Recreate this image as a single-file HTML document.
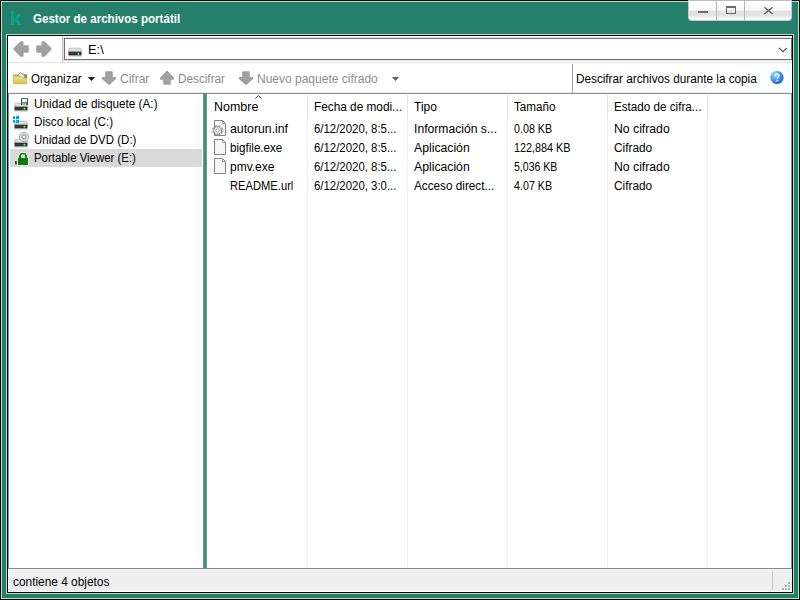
<!DOCTYPE html>
<html><head><meta charset="utf-8">
<style>
*{margin:0;padding:0;box-sizing:border-box}
html,body{width:800px;height:600px;overflow:hidden;background:#000}
body{position:relative;font-family:"Liberation Sans",sans-serif;font-size:12px;color:#000}
.a{position:absolute}
.t{white-space:nowrap;line-height:14px;transform-origin:0 0}
svg{display:block}
</style></head><body>
<div class="a" style="left:1px;top:1px;width:798px;height:598px;background:#267f6b;border:1px solid #a6e6cf"></div>
<div class="a" style="left:6px;top:34px;width:788px;height:560px;background:#000;border:1px solid #a6e6cf"></div>
<div class="a" style="left:8px;top:36px;width:784px;height:556px;background:#fff;"></div>
<svg class="a" style="left:11px;top:11px" width="11" height="14" viewBox="0 0 11 14"><path d="M0 0h3v14H0z M3.5 8.7 L7.2 3 H10.4 L6.3 8.6 L10.4 14 H7.1 Z" fill="#00a88e"/></svg>
<div class="a t" style="left:33px;top:12px;transform:scaleX(0.9638);color:#fff;font-weight:bold;">Gestor de archivos portátil</div>
<div class="a" style="left:688px;top:0px;width:104px;height:21px;background:linear-gradient(#fff 0,#f8f8f8 9px,#e4e4e4 10px,#e2e2e2 14px,#f6f6f6 17px,#fff 19px);border:1px solid #cdc8c8;border-top-color:#bdbdbd;border-radius:0 0 4px 4px"></div>
<div class="a" style="left:716px;top:0px;width:1px;height:20px;background:#b5b5b5;"></div>
<div class="a" style="left:744px;top:0px;width:1px;height:20px;background:#b5b5b5;"></div>
<div class="a" style="left:698px;top:11px;width:10px;height:2px;background:#6b6b6b;"></div>
<div class="a" style="left:726px;top:6px;width:10px;height:8px;background:transparent;border:1px solid #6b6b6b;border-top-width:2px"></div>
<svg class="a" style="left:763px;top:6px" width="11" height="10" viewBox="0 0 11 10"><path d="M1.4 1.2 L9.6 8 M9.6 1.2 L1.4 8" stroke="#5c5c5c" stroke-width="1.3"/></svg>
<div class="a" style="left:8px;top:62px;width:784px;height:1px;background:#e3e3e3;"></div>
<div class="a" style="left:62px;top:36px;width:1px;height:27px;background:#bdbdbd;"></div>
<svg class="a" style="left:12px;top:40px" width="42" height="18" viewBox="0 0 42 18">
<path d="M2.1 8.85 L8.8 2.1 H10.7 V6 H15.9 V11.9 H10.7 V15.9 H8.8 Z" fill="#a0a0a0" stroke="#a0a0a0" stroke-width="1.7" stroke-linejoin="round"/>
<path d="M38.9 8.85 L32.2 2.1 H30.3 V6 H25.1 V11.9 H30.3 V15.9 H32.2 Z" fill="#a0a0a0" stroke="#a0a0a0" stroke-width="1.7" stroke-linejoin="round"/>
</svg>
<div class="a" style="left:63px;top:37px;width:729px;height:24px;background:transparent;border:1px solid #e6e6e6;border-right:none"></div>
<div class="a" style="left:64px;top:38px;width:728px;height:22px;background:transparent;border:1px solid #707070"></div>
<svg class="a" style="left:0;top:0;width:0;height:0"><defs>
<linearGradient id="dtop" x1="0" y1="0" x2="0" y2="1"><stop offset="0" stop-color="#ebebeb"/><stop offset="1" stop-color="#cdcdcd"/></linearGradient>
<radialGradient id="hg" cx="0.35" cy="0.3" r="0.75"><stop offset="0" stop-color="#a0dcfc"/><stop offset="0.5" stop-color="#4a9ee6"/><stop offset="1" stop-color="#1a62cc"/></radialGradient>
</defs></svg>
<svg class="a" style="left:67px;top:47px" width="16" height="11" viewBox="0 0 16 11">
<path d="M1.5 5 L2.1 1.9 Q2.3 1.2 3 1.2 H13 Q13.7 1.2 13.9 1.9 L14.5 5 Z" fill="url(#dtop)" stroke="#aaaaaa" stroke-width="0.7"/>
<rect x="1.5" y="4.8" width="13" height="3.8" fill="#2e2e2e"/>
<rect x="2.5" y="6.2" width="8" height="0.5" fill="#555"/>
<rect x="1.5" y="8.6" width="13" height="1" fill="#c4c8cc"/>
<circle cx="11.5" cy="6.7" r="1" fill="#4cff4c"/>
</svg>
<div class="a t" style="left:88px;top:43px;transform:scaleX(1.0714);">E:\</div>
<svg class="a" style="left:778px;top:46px" width="10" height="7" viewBox="0 0 10 7"><path d="M1 1.8 L5 5.7 L9 1.8" fill="none" stroke="#4a4a4a" stroke-width="1.1"/></svg>
<div class="a" style="left:8px;top:92px;width:784px;height:1px;background:#ececec;"></div>
<div class="a" style="left:8px;top:93px;width:784px;height:1px;background:#898c97;"></div>
<div class="a" style="left:8px;top:93px;width:1px;height:476px;background:#888b96;"></div>
<div class="a" style="left:791px;top:93px;width:1px;height:476px;background:#888b96;"></div>
<div class="a" style="left:572px;top:64px;width:1px;height:29px;background:#a0a0a0;"></div>
<svg class="a" style="left:12px;top:71px" width="16" height="14" viewBox="0 0 16 14">
<defs><linearGradient id="fold" x1="0" y1="0" x2="0" y2="1"><stop offset="0" stop-color="#efe48a"/><stop offset="1" stop-color="#d4c04e"/></linearGradient></defs>
<path d="M1.2 3.2 H6 L7 2.5 H12 L14.8 4 V12 H1.2 Z" fill="#c2b66e"/>
<path d="M12 3.6 H14.8 V7.5 H12 Z" fill="#857a36"/>
<path d="M5.8 4.2 L8.4 1.2 L13 5.4 L11.8 7 Z" fill="#fff" stroke="#7f8fb0" stroke-width="0.8" stroke-linejoin="round"/>
<path d="M1.2 5.5 H9.5 L11 7 H14.8 V12.4 Q14.8 13 14.2 13 H1.8 Q1.2 13 1.2 12.4 Z" fill="url(#fold)" stroke="#c8b452" stroke-width="0.5"/>
</svg>
<div class="a t" style="left:31px;top:72px;transform:scaleX(0.9623);">Organizar</div>
<svg class="a" style="left:87px;top:76px" width="9" height="6" viewBox="0 0 9 6"><path d="M0.9 1 H8.1 L4.5 4.9 Z" fill="#151515"/></svg>
<svg class="a" style="left:101px;top:70px" width="16" height="16" viewBox="0 0 16 16"><path d="M4.2 1.9 L5 1.2 H11 L11.8 1.9 V7 H15 V8.9 L8.6 14.8 H7.4 L1 8.9 V7 H4.2 Z" fill="#a0a0a0"/></svg>
<div class="a t" style="left:120px;top:72px;color:#8c8c8c;">Cifrar</div>
<svg class="a" style="left:159px;top:70px" width="16" height="16" viewBox="0 0 16 16"><path d="M4.2 14.1 L5 14.8 H11 L11.8 14.1 V9.7 H15 V7.8 L8.6 1.1 H7.4 L1 7.8 V9.7 H4.2 Z" fill="#a0a0a0"/></svg>
<div class="a t" style="left:178px;top:72px;transform:scaleX(0.9787);color:#8c8c8c;">Descifrar</div>
<svg class="a" style="left:238px;top:70px" width="16" height="16" viewBox="0 0 16 16"><path d="M4.2 1.9 L5 1.2 H11 L11.8 1.9 V7 H15 V8.9 L8.6 14.8 H7.4 L1 8.9 V7 H4.2 Z" fill="#a0a0a0"/></svg>
<div class="a t" style="left:257px;top:72px;color:#8c8c8c;">Nuevo paquete cifrado</div>
<svg class="a" style="left:391px;top:76px" width="9" height="6" viewBox="0 0 9 6"><path d="M0.9 1 H8.1 L4.5 4.9 Z" fill="#626262"/></svg>
<div class="a t" style="left:576px;top:72px;transform:scaleX(0.9783);">Descifrar archivos durante la copia</div>
<svg class="a" style="left:769px;top:70px" width="16" height="16" viewBox="0 0 16 16">
<circle cx="8" cy="7.5" r="6.6" fill="url(#hg)"/>
<path d="M6.2 5.7 Q6.3 3.9 8.2 3.9 Q10 4 10 5.5 Q10 6.4 9 7 Q8.3 7.5 8.3 8.8" fill="none" stroke="#fff" stroke-width="1.35"/>
<rect x="7.5" y="9.8" width="1.6" height="1.5" fill="#fff"/>
</svg>
<div class="a" style="left:10px;top:149px;width:192px;height:18px;background:#d9d9d9;"></div>
<div class="a t" style="left:34px;top:97px;transform:scaleX(0.9800);">Unidad de disquete (A:)</div>
<div class="a t" style="left:34px;top:115px;transform:scaleX(0.9725);">Disco local (C:)</div>
<div class="a t" style="left:34px;top:133px;transform:scaleX(0.9600);">Unidad de DVD (D:)</div>
<div class="a t" style="left:34px;top:151px;transform:scaleX(0.9509);">Portable Viewer (E:)</div>
<svg class="a" style="left:13px;top:102px" width="16" height="11" viewBox="0 0 16 11">
<path d="M1.5 5 L2.1 1.9 Q2.3 1.2 3 1.2 H13 Q13.7 1.2 13.9 1.9 L14.5 5 Z" fill="url(#dtop)" stroke="#aaaaaa" stroke-width="0.7"/>
<rect x="1.5" y="4.8" width="13" height="3.8" fill="#2e2e2e"/>
<rect x="2.5" y="6.2" width="8" height="0.5" fill="#555"/>
<rect x="1.5" y="8.6" width="13" height="1" fill="#c4c8cc"/>
<circle cx="11.5" cy="6.7" r="1" fill="#4cff4c"/>
</svg>
<svg class="a" style="left:20px;top:97px" width="9" height="9" viewBox="0 0 9 9">
<rect x="1" y="1" width="7" height="7" fill="#4a4a4a"/>
<rect x="1" y="1" width="7" height="1" fill="#2c6ed0"/>
<rect x="2" y="2" width="5" height="3" fill="#f4f4f4"/>
<rect x="2.3" y="5.6" width="3.8" height="2.4" fill="#d6d6d6"/>
<rect x="3.6" y="6.3" width="1.2" height="1.1" fill="#333"/>
</svg>
<svg class="a" style="left:13px;top:120px" width="16" height="11" viewBox="0 0 16 11">
<path d="M1.5 5 L2.1 1.9 Q2.3 1.2 3 1.2 H13 Q13.7 1.2 13.9 1.9 L14.5 5 Z" fill="url(#dtop)" stroke="#aaaaaa" stroke-width="0.7"/>
<rect x="1.5" y="4.8" width="13" height="3.8" fill="#2e2e2e"/>
<rect x="2.5" y="6.2" width="8" height="0.5" fill="#555"/>
<rect x="1.5" y="8.6" width="13" height="1" fill="#c4c8cc"/>
<circle cx="11.5" cy="6.7" r="1" fill="#4cff4c"/>
</svg>
<svg class="a" style="left:12px;top:115px" width="8" height="9" viewBox="0 0 8 9">
<rect x="0.8" y="1.2" width="2.3" height="2.8" fill="#00a8f0"/>
<path d="M4 1 L7 0.6 V4 H4 Z" fill="#00a8f0"/>
<rect x="0.8" y="4.8" width="2.3" height="2.8" fill="#00a8f0"/>
<path d="M4 4.8 H7 V8.2 L4 7.8 Z" fill="#00a8f0"/>
</svg>
<svg class="a" style="left:13px;top:138px" width="16" height="11" viewBox="0 0 16 11">
<path d="M1.5 5 L2.1 1.9 Q2.3 1.2 3 1.2 H13 Q13.7 1.2 13.9 1.9 L14.5 5 Z" fill="url(#dtop)" stroke="#aaaaaa" stroke-width="0.7"/>
<rect x="1.5" y="4.8" width="13" height="3.8" fill="#2e2e2e"/>
<rect x="2.5" y="6.2" width="8" height="0.5" fill="#555"/>
<rect x="1.5" y="8.6" width="13" height="1" fill="#c4c8cc"/>
<circle cx="11.5" cy="6.7" r="1" fill="#4cff4c"/>
</svg>
<svg class="a" style="left:18px;top:131px" width="12" height="12" viewBox="0 0 12 12">
<circle cx="6" cy="6" r="4.6" fill="#dfe3e3" stroke="#a4a4a4" stroke-width="0.9"/>
<circle cx="6" cy="6" r="2.2" fill="#c8c8c8" stroke="#8a8a8a" stroke-width="0.8"/>
<circle cx="6" cy="6" r="1" fill="#fff"/>
</svg>
<svg class="a" style="left:13px;top:151px" width="17" height="16" viewBox="0 0 17 16">
<rect x="1.6" y="9.5" width="2.4" height="4.6" fill="#eef0f0"/>
<rect x="2" y="10" width="1.8" height="3.5" fill="#404040"/>
<path d="M4.4 15 V6.6 H5.3 V4.2 L6.3 3.2 V2.6 L7.6 1.3 H12.4 L13.7 2.6 V3.2 L14.7 4.2 V6.6 H15.6 V15 Z" fill="#fff"/>
<rect x="5" y="7" width="10" height="7" fill="#008000"/>
<path d="M6 7.2 V4.5 L7 3.5 V3 L8 2 H12 L13 3 V3.5 L14 4.5 V7.2 Z M8 7.2 V4.3 L8.8 3.5 H11.2 L12 4.3 V7.2 Z" fill="#008000" fill-rule="evenodd"/>
<rect x="8.8" y="4.3" width="2.4" height="2.7" fill="#dcdcdc"/>
</svg>
<div class="a" style="left:203px;top:93px;width:4px;height:476px;background:#2a9a7c;border-left:1px solid #888b96;border-right:1px solid #888b96"></div>
<div class="a t" style="left:214px;top:100px;transform:scaleX(1.0381);">Nombre</div>
<svg class="a" style="left:254px;top:94px" width="10" height="6" viewBox="0 0 10 6"><path d="M1.3 4.7 L4.4 1.5 L7.5 4.7" fill="none" stroke="#555" stroke-width="1"/></svg>
<div class="a t" style="left:314px;top:100px;transform:scaleX(0.9841);">Fecha de modi...</div>
<div class="a t" style="left:414px;top:100px;">Tipo</div>
<div class="a t" style="left:514px;top:100px;transform:scaleX(0.9709);">Tamaño</div>
<div class="a t" style="left:614px;top:100px;transform:scaleX(0.9716);">Estado de cifra...</div>
<div class="a" style="left:307px;top:95px;width:1px;height:24px;background:#e5e5e5;"></div>
<div class="a" style="left:307px;top:119px;width:1px;height:449px;background:#eaf1fb;"></div>
<div class="a" style="left:407px;top:95px;width:1px;height:24px;background:#e5e5e5;"></div>
<div class="a" style="left:407px;top:119px;width:1px;height:449px;background:#eaf1fb;"></div>
<div class="a" style="left:507px;top:95px;width:1px;height:24px;background:#e5e5e5;"></div>
<div class="a" style="left:507px;top:119px;width:1px;height:449px;background:#eaf1fb;"></div>
<div class="a" style="left:607px;top:95px;width:1px;height:24px;background:#e5e5e5;"></div>
<div class="a" style="left:607px;top:119px;width:1px;height:449px;background:#eaf1fb;"></div>
<div class="a" style="left:707px;top:95px;width:1px;height:24px;background:#e5e5e5;"></div>
<div class="a" style="left:707px;top:119px;width:1px;height:449px;background:#eaf1fb;"></div>
<div class="a t" style="left:230px;top:122px;transform:scaleX(1.0228);">autorun.inf</div>
<div class="a t" style="left:314px;top:122px;transform:scaleX(0.9500);">6/12/2020, 8:5...</div>
<div class="a t" style="left:414px;top:122px;transform:scaleX(1.0125);">Información s...</div>
<div class="a t" style="left:514px;top:122px;transform:scaleX(0.8929);">0.08 KB</div>
<div class="a t" style="left:614px;top:122px;transform:scaleX(1.0185);">No cifrado</div>
<svg class="a" style="left:214px;top:120px" width="12" height="16" viewBox="0 0 12 16"><path d="M0.5 0.5 H8.5 L11.5 3.5 V15.5 H0.5 Z" fill="#f6f6f6" stroke="#858585" stroke-width="1"/><path d="M8.5 0.8 V3.5 H11.2" fill="none" stroke="#9a9a9a" stroke-width="0.9"/></svg>
<div class="a t" style="left:230px;top:141px;transform:scaleX(0.9676);">bigfile.exe</div>
<div class="a t" style="left:314px;top:141px;transform:scaleX(0.9500);">6/12/2020, 8:5...</div>
<div class="a t" style="left:414px;top:141px;transform:scaleX(1.0185);">Aplicación</div>
<div class="a t" style="left:514px;top:141px;transform:scaleX(0.9016);">122,884 KB</div>
<div class="a t" style="left:614px;top:141px;transform:scaleX(0.9872);">Cifrado</div>
<svg class="a" style="left:214px;top:139px" width="12" height="16" viewBox="0 0 12 16"><path d="M0.5 0.5 H8.5 L11.5 3.5 V15.5 H0.5 Z" fill="#f6f6f6" stroke="#858585" stroke-width="1"/><path d="M8.5 0.8 V3.5 H11.2" fill="none" stroke="#9a9a9a" stroke-width="0.9"/></svg>
<div class="a t" style="left:230px;top:160px;">pmv.exe</div>
<div class="a t" style="left:314px;top:160px;transform:scaleX(0.9500);">6/12/2020, 8:5...</div>
<div class="a t" style="left:414px;top:160px;transform:scaleX(1.0185);">Aplicación</div>
<div class="a t" style="left:514px;top:160px;transform:scaleX(0.8776);">5,036 KB</div>
<div class="a t" style="left:614px;top:160px;transform:scaleX(1.0185);">No cifrado</div>
<svg class="a" style="left:214px;top:158px" width="12" height="16" viewBox="0 0 12 16"><path d="M0.5 0.5 H8.5 L11.5 3.5 V15.5 H0.5 Z" fill="#f6f6f6" stroke="#858585" stroke-width="1"/><path d="M8.5 0.8 V3.5 H11.2" fill="none" stroke="#9a9a9a" stroke-width="0.9"/></svg>
<div class="a t" style="left:230px;top:179px;transform:scaleX(0.9313);">README.url</div>
<div class="a t" style="left:314px;top:179px;transform:scaleX(0.9500);">6/12/2020, 3:0...</div>
<div class="a t" style="left:414px;top:179px;transform:scaleX(0.9784);">Acceso direct...</div>
<div class="a t" style="left:514px;top:179px;transform:scaleX(0.8929);">4.07 KB</div>
<div class="a t" style="left:614px;top:179px;transform:scaleX(0.9872);">Cifrado</div>
<svg class="a" style="left:211.5px;top:125.2px" width="11" height="11" viewBox="0 0 11 11">
<path d="M6.19 1.87 L6.67 0.64 L8.11 1.24 L7.58 2.44 L8.56 3.42 L9.76 2.89 L10.36 4.33 L9.13 4.81 L9.13 6.19 L10.36 6.67 L9.76 8.11 L8.56 7.58 L7.58 8.56 L8.11 9.76 L6.67 10.36 L6.19 9.13 L4.81 9.13 L4.33 10.36 L2.89 9.76 L3.42 8.56 L2.44 7.58 L1.24 8.11 L0.64 6.67 L1.87 6.19 L1.87 4.81 L0.64 4.33 L1.24 2.89 L2.44 3.42 L3.42 2.44 L2.89 1.24 L4.33 0.64 L4.81 1.87 Z" fill="#e3e6e6" stroke="#808080" stroke-width="0.85" stroke-linejoin="round"/>
<circle cx="5.5" cy="5.5" r="1.6" fill="#fff" stroke="#9ea2a2" stroke-width="0.8"/>
</svg>
<div class="a" style="left:8px;top:568px;width:784px;height:1px;background:#888b96;"></div>
<div class="a" style="left:9px;top:569px;width:783px;height:22px;background:#efefef;"></div>
<div class="a" style="left:772px;top:571px;width:1px;height:19px;background:#c6c6c6;"></div>
<div class="a t" style="left:13px;top:575px;transform:scaleX(0.9897);">contiene 4 objetos</div>
<div class="a" style="left:788px;top:582px;width:2px;height:2px;background:#b4b4b4;"></div>
<div class="a" style="left:785px;top:585px;width:2px;height:2px;background:#b4b4b4;"></div>
<div class="a" style="left:788px;top:585px;width:2px;height:2px;background:#b4b4b4;"></div>
<div class="a" style="left:782px;top:588px;width:2px;height:2px;background:#b4b4b4;"></div>
<div class="a" style="left:785px;top:588px;width:2px;height:2px;background:#b4b4b4;"></div>
<div class="a" style="left:788px;top:588px;width:2px;height:2px;background:#b4b4b4;"></div>
</body></html>
